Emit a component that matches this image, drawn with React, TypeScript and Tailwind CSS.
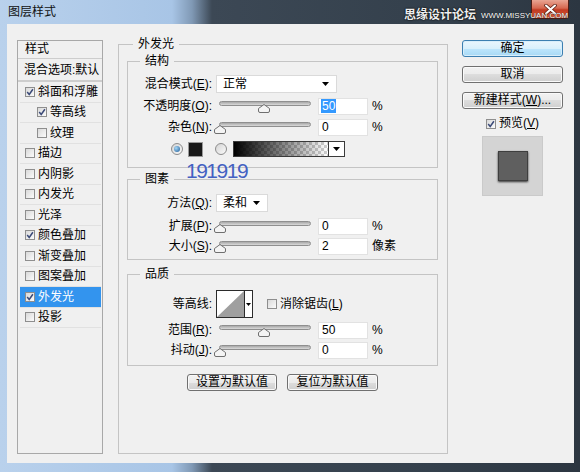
import React from "react";

function Check({ checked }: { checked?: boolean }) {
  return (
    <span className="inline-flex h-[10px] w-[10px] shrink-0 items-center justify-center border border-[#8e8e8e] bg-[linear-gradient(135deg,#d9d9d9,#fbfbfb)]">
      {checked && (
        <svg width="8" height="8" viewBox="0 0 8 8">
          <path d="M1.2 4 L3.2 6.4 L6.9 1.2" stroke="#3b4a78" strokeWidth="1.5" fill="none" />
        </svg>
      )}
    </span>
  );
}

function Radio({ on }: { on?: boolean }) {
  return (
    <span className="inline-flex h-[12px] w-[12px] shrink-0 items-center justify-center rounded-full border border-[#8c8c8c] bg-[linear-gradient(135deg,#d4d4d4,#fafafa)]">
      {on && <span className="h-[6px] w-[6px] rounded-full bg-[radial-gradient(circle_at_35%_35%,#a6d8f7,#1d5a96)]" />}
    </span>
  );
}

function Slider({ pct }: { pct: number }) {
  return (
    <div className="relative ml-[7px] h-[14px] w-[92px] shrink-0">
      <div className="absolute left-0 right-0 top-[2px] h-[5px] rounded-full border border-[#8f8f8f] bg-[linear-gradient(#a8a8a8,#dadada)]" />
      <svg
        className="absolute top-[5px]"
        style={{ left: `${pct * 0.88 - 5}px` }}
        width="12"
        height="9"
        viewBox="0 0 12 9"
      >
        <path d="M6 0.5 L11.5 4.5 V7 Q11.5 8.5 10 8.5 H2 Q0.5 8.5 0.5 7 V4.5 Z" fill="#f4f4f4" stroke="#6f6f6f" />
      </svg>
    </div>
  );
}

function Num({ v, sel }: { v: string; sel?: boolean }) {
  return (
    <div className="ml-[7px] flex h-[17px] w-[50px] shrink-0 items-center border border-[#e2e2e2] bg-white pl-[2px]">
      {sel ? <span className="bg-[#3399ff] px-[1px] leading-[14px] text-white">{v}</span> : <span className="pl-[1px]">{v}</span>}
    </div>
  );
}

function Arrow() {
  return (
    <svg width="7" height="4" viewBox="0 0 7 4">
      <path d="M0 0H7L3.5 4Z" fill="#000" />
    </svg>
  );
}

function Select({ text, w }: { text: string; w: string }) {
  return (
    <div className={`ml-[4px] flex h-[18px] shrink-0 items-center justify-between border border-[#dadada] bg-white pl-[6px] pr-[7px] ${w}`}>
      <span>{text}</span>
      <Arrow />
    </div>
  );
}

function Row({ label, cls, children }: { label: React.ReactNode; cls: string; children?: React.ReactNode }) {
  return (
    <div className={`flex items-center ${cls}`}>
      <div className="w-[84px] shrink-0 whitespace-nowrap text-right">{label}</div>
      {children}
    </div>
  );
}

function Btn({ children, def, w }: { children: React.ReactNode; def?: boolean; w: string }) {
  return (
    <div
      className={`flex h-[17px] items-center justify-center rounded-[3px] border leading-[15px] ${w} ${
        def
          ? "border-[#3c7fb1] bg-[linear-gradient(#eaf6fd_0%,#d9f0fc_50%,#bee6fd_50%,#a7d9f5_100%)] shadow-[inset_0_0_0_1px_#d8eefb]"
          : "border-[#707070] bg-[linear-gradient(#f2f2f2_0%,#ebebeb_50%,#dddddd_50%,#cfcfcf_100%)] shadow-[inset_0_0_0_1px_#fafafa]"
      }`}
    >
      {children}
    </div>
  );
}

const listItems: { t: string; c?: boolean; lvl2?: boolean; sel?: boolean }[] = [
  { t: "斜面和浮雕", c: true },
  { t: "等高线", c: true, lvl2: true },
  { t: "纹理", lvl2: true },
  { t: "描边" },
  { t: "内阴影" },
  { t: "内发光" },
  { t: "光泽" },
  { t: "颜色叠加", c: true },
  { t: "渐变叠加" },
  { t: "图案叠加" },
  { t: "外发光", c: true, sel: true },
  { t: "投影" },
];

export default function App() {
  return (
    <div className="relative flex h-[472px] w-[580px] flex-col overflow-hidden bg-[linear-gradient(90deg,#b9d1ec_0px,#a8c5e6_172px,#8099b5_192px,#3c4855_212px,#34404c_430px,#2c3641_100%)] font-['Liberation_Sans','Noto_Sans_CJK_SC',sans-serif] text-[12px] text-black">
      {/* title bar */}
      <div className="flex h-[24px] shrink-0 items-start">
        <div className="pl-[8px] pt-[4px] leading-[16px] text-[#111]">图层样式</div>
        <div className="ml-auto mr-[11px] flex h-[19px] w-[38px] items-center justify-center rounded-b-[4px] border border-t-0 border-[#4e1d14] bg-[linear-gradient(#e9a593_0%,#d66850_45%,#c23a21_55%,#d6603f_100%)]">
          <svg width="13" height="11" viewBox="0 0 13 11">
            <path d="M2 1.5 L11 9.5 M11 1.5 L2 9.5" stroke="#5a2014" strokeWidth="3.6" strokeLinecap="round" />
            <path d="M2 1.5 L11 9.5 M11 1.5 L2 9.5" stroke="#ffffff" strokeWidth="2" strokeLinecap="round" />
          </svg>
        </div>
      </div>

      {/* watermark */}
      <div className="absolute left-[404px] top-[8px] flex items-end gap-[5px] leading-[14px]">
        <span className="text-[12px] font-bold text-[#eeeeee] [text-shadow:0_0_1px_#000,0_0_2px_#000]">思缘设计论坛</span>
        <span className="pb-[1px] text-[8px] leading-[10px] text-white [text-shadow:0_0_1px_#000]">WWW.MISSYUAN.COM</span>
      </div>

      {/* client */}
      <div className="mb-[9px] ml-[7px] mr-[6px] flex flex-1 items-stretch bg-[#f0f0f0] pb-[9px] pl-[10px]">
        {/* left list */}
        <div className="mt-[16px] flex w-[86px] shrink-0 flex-col border border-[#a8a8a8] bg-[#f0f0f0]">
          <div className="h-[18px] border-b border-[#cdcdcd] pl-[7px] leading-[17px]">样式</div>
          <div className="h-[23px] border-b-2 border-[#cdcdcd] pl-[6px] leading-[22px] whitespace-nowrap">混合选项:默认</div>
          {listItems.map((it) => (
            <div
              key={it.t}
              className={`ml-[2px] mr-[1px] flex h-[20.5px] items-center gap-[3px] border-b border-[#e1e1e1] ${
                it.lvl2 ? "pl-[17px]" : "pl-[5px]"
              } ${it.sel ? "bg-[#3394ee] text-white" : ""}`}
            >
              <Check checked={it.c} />
              <span className="leading-[16px]">{it.t}</span>
            </div>
          ))}
        </div>

        {/* middle */}
        <fieldset className="ml-[15px] mt-[12px] w-[330px] min-w-0 shrink-0 border border-[#c4c4c4] p-0">
          <legend className="ml-[14px] px-[5px] leading-[16px]">外发光</legend>
          <div className="flex flex-col pl-[8px] pr-[9px]">
            {/* 结构 */}
            <fieldset className="mt-[1px] min-w-0 border border-[#c4c4c4] p-0">
              <legend className="ml-[12px] px-[5px] leading-[16px]">结构</legend>
              <div className="flex flex-col pb-[10px]">
                <Row label={<>混合模式(<u>E</u>):</>} cls="mt-[6px] h-[18px]">
                  <Select text="正常" w="w-[121px]" />
                </Row>
                <Row label={<>不透明度(<u>O</u>):</>} cls="mt-[4px] h-[18px]">
                  <Slider pct={50} />
                  <Num v="50" sel />
                  <span className="ml-[4px]">%</span>
                </Row>
                <Row label={<>杂色(<u>N</u>):</>} cls="mt-[3px] h-[18px]">
                  <Slider pct={0} />
                  <Num v="0" />
                  <span className="ml-[4px]">%</span>
                </Row>
                <div className="mt-[5px] flex h-[16px] items-center pl-[43px]">
                  <Radio on />
                  <div className="ml-[5px] h-[15px] w-[15px] border border-[#9a9a9a] bg-[#191919]" />
                  <div className="ml-[12px] flex">
                    <Radio />
                  </div>
                  <div className="ml-[6px] flex h-[16px] w-[112px] border border-[#3a3a3a]">
                    <div className="flex-1 [background-image:linear-gradient(to_right,#000,rgba(0,0,0,0)),repeating-conic-gradient(#cfcfcf_0_25%,#ffffff_0_50%)] [background-size:100%_100%,6px_6px]" />
                    <div className="flex w-[16px] items-center justify-center border-l border-[#3a3a3a] bg-white">
                      <Arrow />
                    </div>
                  </div>
                </div>
              </div>
            </fieldset>

            {/* 图素 */}
            <fieldset className="mt-[3px] min-w-0 border border-[#c4c4c4] p-0">
              <legend className="ml-[12px] px-[5px] leading-[16px]">图素</legend>
              <div className="flex flex-col pb-[4px]">
                <Row label={<>方法(<u>Q</u>):</>} cls="mt-[7px] h-[18px]">
                  <Select text="柔和" w="w-[52px]" />
                </Row>
                <Row label={<>扩展(<u>P</u>):</>} cls="mt-[5px] h-[18px]">
                  <Slider pct={0} />
                  <Num v="0" />
                  <span className="ml-[4px]">%</span>
                </Row>
                <Row label={<>大小(<u>S</u>):</>} cls="mt-[2px] h-[18px]">
                  <Slider pct={0} />
                  <Num v="2" />
                  <span className="ml-[4px]">像素</span>
                </Row>
              </div>
            </fieldset>

            {/* 品质 */}
            <fieldset className="mt-[6px] min-w-0 border border-[#c4c4c4] p-0">
              <legend className="ml-[12px] px-[5px] leading-[16px]">品质</legend>
              <div className="flex flex-col pb-[7px]">
                <Row label="等高线:" cls="mt-[8px] h-[28px]">
                  <div className="ml-[4px] flex h-[28px] w-[37px] shrink-0 border border-[#2b2b2b] bg-white">
                    <svg width="27" height="26" viewBox="0 0 27 26">
                      <path d="M0 26 L27 0 L27 26 Z" fill="#9f9f9f" />
                    </svg>
                    <div className="flex flex-1 items-center justify-center border-l border-[#2b2b2b]">
                      <svg width="5" height="3" viewBox="0 0 5 3">
                        <path d="M0 0H5L2.5 3Z" fill="#000" />
                      </svg>
                    </div>
                  </div>
                  <div className="ml-[14px] flex">
                    <Check />
                  </div>
                  <span className="ml-[3px]">消除锯齿(<u>L</u>)</span>
                </Row>
                <Row label={<>范围(<u>R</u>):</>} cls="mt-[4px] h-[16px]">
                  <Slider pct={50} />
                  <Num v="50" />
                  <span className="ml-[4px]">%</span>
                </Row>
                <Row label={<>抖动(<u>J</u>):</>} cls="mt-[4px] h-[16px]">
                  <Slider pct={0} />
                  <Num v="0" />
                  <span className="ml-[4px]">%</span>
                </Row>
              </div>
            </fieldset>

            <div className="mt-[8px] flex justify-center gap-[10px]">
              <Btn w="w-[90px]">设置为默认值</Btn>
              <Btn w="w-[91px]">复位为默认值</Btn>
            </div>
          </div>
        </fieldset>

        {/* right column */}
        <div className="ml-[14px] mt-[16px] flex w-[101px] shrink-0 flex-col self-start">
          <Btn def w="w-[101px]">确定</Btn>
          <div className="mt-[9px]">
            <Btn w="w-[101px]">取消</Btn>
          </div>
          <div className="mt-[9px]">
            <Btn w="w-[101px]">
              新建样式(<u>W</u>)...
            </Btn>
          </div>
          <div className="mt-[8px] flex h-[13px] items-center justify-center gap-[3px]">
            <Check checked />
            <span className="leading-[13px]">
              预览(<u>V</u>)
            </span>
          </div>
          <div className="mx-auto mt-[6px] flex h-[60px] w-[61px] items-center justify-center border border-[#cacaca] bg-[#d4d4d4]">
            <div className="h-[30px] w-[30px] border border-[#3e3e3e] bg-[#5f5f5f] shadow-[0_1px_2px_#333]" />
          </div>
        </div>
      </div>

      {/* annotation */}
      <div className="absolute left-[186px] top-[160px] text-[21px] leading-[21px] tracking-[-1.5px] text-[#4361c2]">191919</div>
    </div>
  );
}
